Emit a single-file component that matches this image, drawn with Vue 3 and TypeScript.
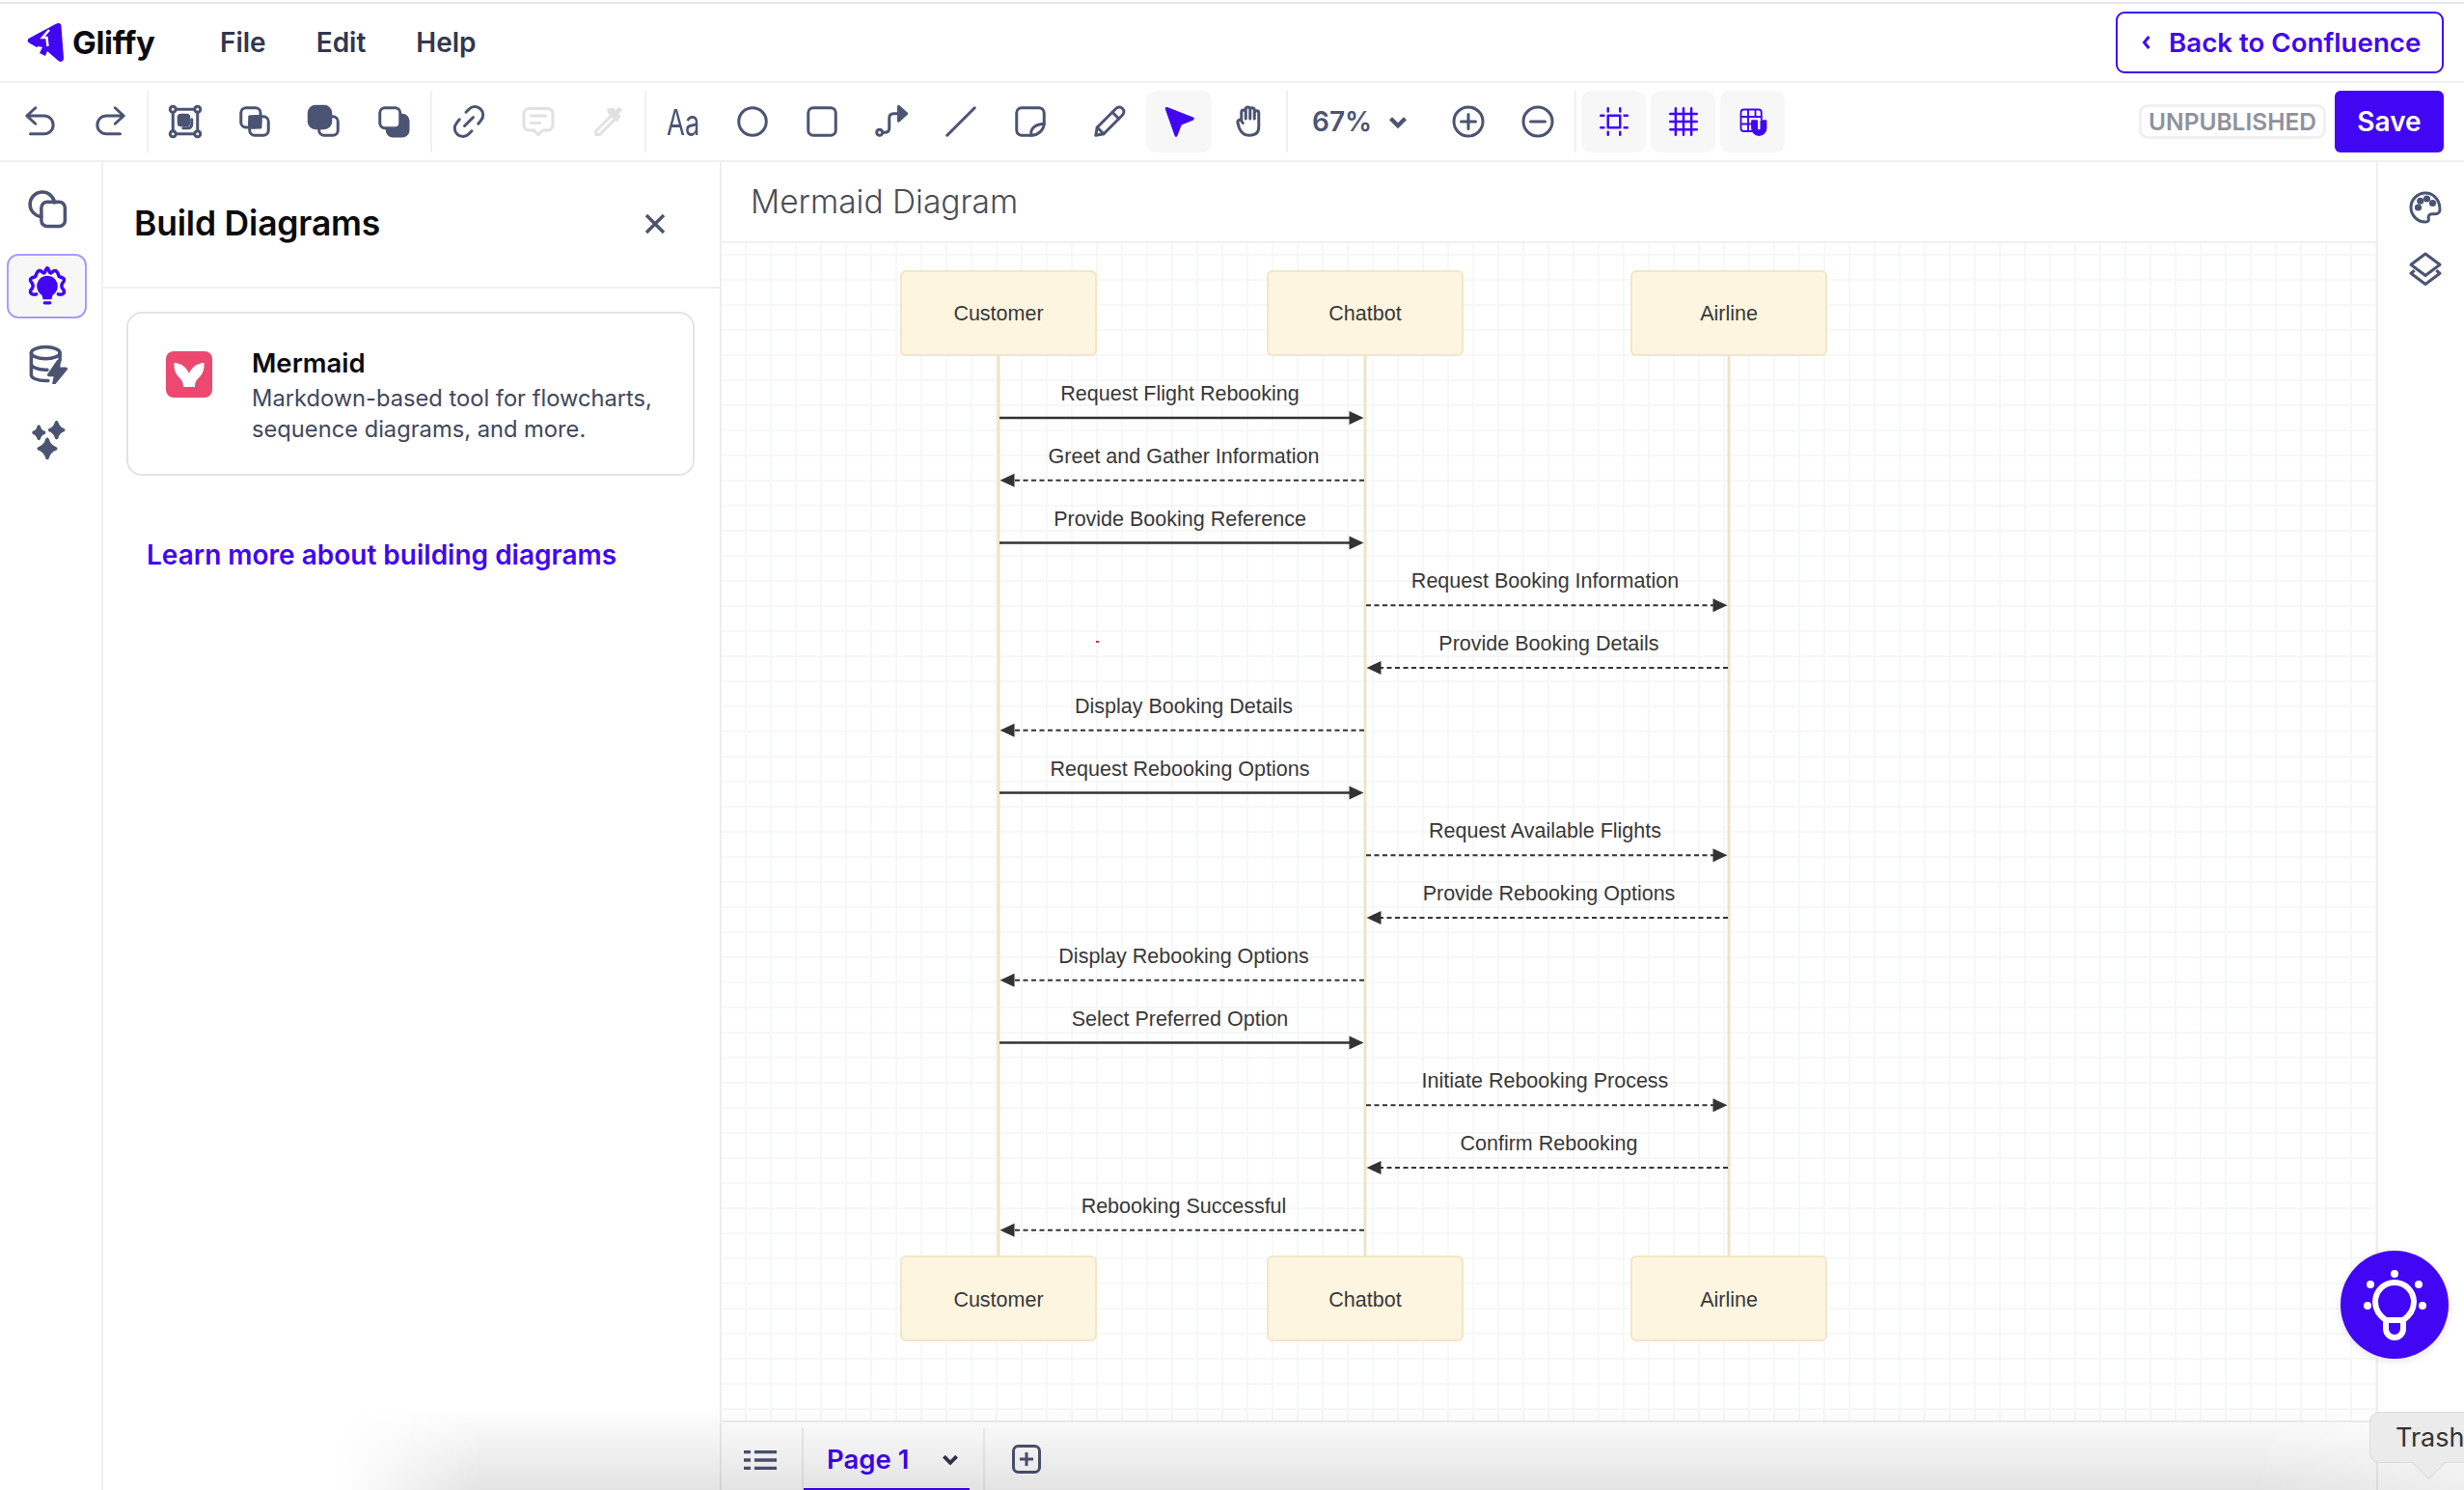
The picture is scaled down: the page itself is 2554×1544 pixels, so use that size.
<script setup lang="ts">
import { computed } from 'vue';

type Actor = 'customer' | 'chatbot' | 'airline';

const lifeline: Record<Actor, number> = { customer: 1035, chatbot: 1415, airline: 1792 };
const boxes: { name: string; actor: Actor }[] = [
  { name: 'Customer', actor: 'customer' },
  { name: 'Chatbot', actor: 'chatbot' },
  { name: 'Airline', actor: 'airline' },
];

const rawMessages: { label: string; from: Actor; to: Actor; dashed: boolean }[] = [
  { label: 'Request Flight Rebooking', from: 'customer', to: 'chatbot', dashed: false },
  { label: 'Greet and Gather Information', from: 'chatbot', to: 'customer', dashed: true },
  { label: 'Provide Booking Reference', from: 'customer', to: 'chatbot', dashed: false },
  { label: 'Request Booking Information', from: 'chatbot', to: 'airline', dashed: true },
  { label: 'Provide Booking Details', from: 'airline', to: 'chatbot', dashed: true },
  { label: 'Display Booking Details', from: 'chatbot', to: 'customer', dashed: true },
  { label: 'Request Rebooking Options', from: 'customer', to: 'chatbot', dashed: false },
  { label: 'Request Available Flights', from: 'chatbot', to: 'airline', dashed: true },
  { label: 'Provide Rebooking Options', from: 'airline', to: 'chatbot', dashed: true },
  { label: 'Display Rebooking Options', from: 'chatbot', to: 'customer', dashed: true },
  { label: 'Select Preferred Option', from: 'customer', to: 'chatbot', dashed: false },
  { label: 'Initiate Rebooking Process', from: 'chatbot', to: 'airline', dashed: true },
  { label: 'Confirm Rebooking', from: 'airline', to: 'chatbot', dashed: true },
  { label: 'Rebooking Successful', from: 'chatbot', to: 'customer', dashed: true },
];

const messages = computed(() =>
  rawMessages.map((m, i) => {
    const y = 433 + i * 64.75;
    const x1 = lifeline[m.from];
    const x2 = lifeline[m.to];
    const dir = x2 > x1 ? 1 : -1;
    const tip = x2 - dir * 1.5;
    const head = `${tip},${y} ${tip - dir * 15},${y - 7} ${tip - dir * 15},${y + 7}`;
    return {
      ...m,
      y,
      x1: x1 + dir,
      x2: tip - dir * 13,
      head,
      textX: (x1 + x2) / 2 - dir * 2,
    };
  })
);
</script>

<template>
  <div class="app">
    <!-- Top menu -->
    <header class="menubar">
      <div class="logo">
        <svg class="logo-mark" viewBox="0 0 41 41">
          <path d="M1.500 16 30 .8c3-1.500 5.500-.5 5.500 2.500L38 36c.2 3.500-3 5-5.500 3L21 29l-2 5-6-3 3-6-4-1-2 1-8.500-5c-1.200-.8-1-2.200 0-4Z" fill="#4106f4" />
          <path d="M23 7 16 15h4.500l1 9" fill="none" stroke="#fff" stroke-width="2.500" />
        </svg>
        <span class="logo-name">Gliffy</span>
      </div>
      <nav class="menu">
        <span>File</span>
        <span>Edit</span>
        <span>Help</span>
      </nav>
      <button class="back-btn">
        <svg class="back-chevron" viewBox="0 0 12 20"><path d="M8.500 4 3.500 10l5 6" /></svg>
        Back to Confluence
      </button>
    </header>

    <!-- Toolbar -->
    <div class="toolbar">
      <button class="tool">
        <svg class="ico" viewBox="0 0 24 24"><path d="M8.500 2.500 2.500 8l6 5.500M3 8h11.500a6.200 6.200 0 0 1 0 12.500H5" /></svg>
      </button>
      <button class="tool">
        <svg class="ico" viewBox="0 0 24 24"><path d="M15.500 2.500 21.500 8l-6 5.500M21 8H9.500a6.200 6.200 0 0 0 0 12.500H19" /></svg>
      </button>
      <i class="sep"></i>

      <button class="tool">
        <svg class="ico" viewBox="0 0 24 24">
          <circle cx="3.500" cy="3.500" r="2" /><circle cx="20.500" cy="3.500" r="2" />
          <circle cx="3.500" cy="20.500" r="2" /><circle cx="20.500" cy="20.500" r="2" />
          <path d="M5.500 3.500h13M5.500 20.500h13M3.500 5.500v13M20.500 5.500v13" />
          <rect x="7.500" y="7.500" width="7" height="7" rx="1.500" class="solid" />
          <path d="M16.500 10.500v3.500a2.500 2.500 0 0 1-2.500 2.500h-3.500" />
        </svg>
      </button>
      <button class="tool">
        <svg class="ico" viewBox="0 0 24 24">
          <rect x="8.500" y="8.500" width="7.500" height="7.500" class="solid" />
          <rect x="2.500" y="2.500" width="13.500" height="13.500" rx="3.500" />
          <rect x="8.500" y="8.500" width="13" height="13" rx="3.500" />
        </svg>
      </button>
      <button class="tool">
        <svg class="ico" viewBox="0 0 24 24">
          <rect x="8.500" y="8.500" width="13" height="13" rx="3.500" />
          <rect x="1.500" y="1.500" width="15" height="15" rx="4.500" class="solid" />
        </svg>
      </button>
      <button class="tool">
        <svg class="ico" viewBox="0 0 24 24">
          <rect x="7.500" y="7.500" width="14.500" height="14.500" rx="4" class="solid" />
          <rect x="2.500" y="2.500" width="14" height="14" rx="3.500" class="knock" />
        </svg>
      </button>
      <i class="sep"></i>

      <button class="tool">
        <svg class="ico" viewBox="0 0 24 24">
          <path d="M10 5.500 12 3.500a5.600 5.600 0 0 1 8.300 7.700L18.500 13.500M14 18.500 12 20.500a5.600 5.600 0 0 1-8.300-7.700l1.800-2.300M9 15l6-6" />
        </svg>
      </button>
      <button class="tool">
        <svg class="ico off" viewBox="0 0 24 24">
          <path d="M5.500 3h13A3.500 3.500 0 0 1 22 6.500v8a3.500 3.500 0 0 1-3.500 3.500H15l-3 3-3-3H5.500A3.500 3.500 0 0 1 2 14.500v-8A3.500 3.500 0 0 1 5.500 3Z" />
          <path d="M7 8h10M7 13h6" />
        </svg>
      </button>
      <button class="tool">
        <svg class="ico off eyedrop" viewBox="0 0 24 24">
          <path d="M16 7 4.500 18.500V21H7L18 10" />
          <path d="M13.500 5.500 19 11" />
          <path d="M16 3.500 18 5.500l2.500-2.500 1 1-2.500 2.500 1.500 2-1.500 1.500-6-6Z" class="solid-off" />
        </svg>
      </button>
      <i class="sep"></i>

      <button class="tool"><span class="aa">Aa</span></button>
      <button class="tool">
        <svg class="ico" viewBox="0 0 24 24"><circle cx="12" cy="12" r="9.500" /></svg>
      </button>
      <button class="tool">
        <svg class="ico" viewBox="0 0 24 24"><rect x="2.500" y="2.500" width="19" height="19" rx="3.500" /></svg>
      </button>
      <button class="tool">
        <svg class="ico" viewBox="0 0 24 24">
          <circle cx="3.800" cy="19.500" r="2" />
          <path d="M5.800 19.500h1.700c2 0 3-1 3-3V9.500c0-2 1-3 3-3h5" />
          <path d="M17 1.500 22.500 6.500 17 11.500Z" class="solid" />
        </svg>
      </button>
      <button class="tool">
        <svg class="ico" viewBox="0 0 24 24"><path d="M2.500 21.500 21.500 2.500" /></svg>
      </button>
      <button class="tool">
        <svg class="ico" viewBox="0 0 24 24">
          <path d="M13 21.500H6A3.500 3.500 0 0 1 2.500 18V6A3.500 3.500 0 0 1 6 2.500h12A3.500 3.500 0 0 1 21.500 6v7C21.500 18 17 21.500 13 21.500Z" />
          <path d="M13 21.500c-1.500-3 .5-7.500 8.500-8" />
        </svg>
      </button>
      <button class="tool tool-pen">
        <svg class="ico" viewBox="0 0 24 24">
          <path d="M2.500 21.500 3.500 16 16.500 3a2.800 2.800 0 0 1 4.500 4.500L8 20.500Z" />
          <path d="M14 5.500 18.500 10M3.500 16 8 20.500" />
        </svg>
      </button>
      <button class="tool tool-pointer">
        <svg class="ico blue" viewBox="0 0 24 24">
          <path d="M3.500 3 21.500 10 13 13.500 10 21.500Z" class="solid-blue" />
        </svg>
      </button>
      <button class="tool tool-hand">
        <svg class="ico" viewBox="0 0 24 24">
          <path d="M6.500 11V5.500a1.500 1.500 0 0 1 3 0V10M9.500 10V3.500a1.500 1.500 0 0 1 3 0V10M12.500 10V4a1.500 1.500 0 0 1 3 0v6M15.500 10V6a1.500 1.500 0 0 1 3 0v9.500c0 4-2.500 6-6.500 6s-6-2.500-7-5l-1-3.500c-.5-1.800 1.500-3 2.500-1.500l1 1.500" />
        </svg>
      </button>
      <i class="sep"></i>

      <div class="zoom">
        <span class="zoom-value">67%</span>
        <svg class="zoom-chevron" viewBox="0 0 20 14"><path d="M3 3.500 10 10.500 17 3.500" /></svg>
      </div>
      <button class="tool">
        <svg class="ico" viewBox="0 0 24 24"><circle cx="12" cy="12" r="10" /><path d="M12 7v10M7 12h10" /></svg>
      </button>
      <button class="tool">
        <svg class="ico" viewBox="0 0 24 24"><circle cx="12" cy="12" r="10" /><path d="M7 12h10" /></svg>
      </button>
      <i class="sep"></i>

      <div class="toggles">
        <button class="toggle">
          <svg class="ico small blue" viewBox="0 0 24 24">
            <rect x="7" y="7" width="10" height="10" />
            <path d="M7 1v2.500M17 1v2.500M7 20.500V23M17 20.500V23M1 7h2.500M20.500 7H23M1 17h2.500M20.500 17H23" />
          </svg>
        </button>
        <button class="toggle">
          <svg class="ico small blue" viewBox="0 0 24 24">
            <path d="M5.500 1v22M12 1v22M18.500 1v22M1 5.500h22M1 12h22M1 18.500h22" />
          </svg>
        </button>
        <button class="toggle">
          <svg class="ico small blue" viewBox="0 0 24 24">
            <path d="M12 20H4.500A2.500 2.500 0 0 1 2 17.500v-13A2.500 2.500 0 0 1 4.500 2h12A2.500 2.500 0 0 1 19 4.500V10M2 8h17M2 14h10M8 2v18M14 2v6" class="thin" />
            <path d="M11.500 11.500v6a5.500 5.500 0 0 0 11 0v-6h-3.500v6a2 2 0 0 1-4 0v-6Z" class="solid-blue" />
          </svg>
        </button>
      </div>

      <div class="actions">
        <span class="status">UNPUBLISHED</span>
        <button class="save">Save</button>
      </div>
    </div>

    <div class="workspace">
      <!-- Left rail -->
      <aside class="rail">
        <button class="rail-btn">
          <svg class="rail-ico" viewBox="0 0 24 24">
            <path d="M8.500 16.300A7.300 7.300 0 1 1 16.300 8" />
            <rect x="8.500" y="7.500" width="14" height="14.500" rx="3.500" />
          </svg>
        </button>
        <button class="rail-btn active">
          <svg class="rail-ico blue" viewBox="0 0 24 24">
            <path d="M5.500 16.500C4 17 2 16.500 2 15c0-1.500 1.500-1.500 1.500-3.500S2 9.500 2 8c0-1.500 2.500-1.500 3-2s.5-3.500 2.500-3.500C9 2.500 9 4 10 4s1-3 2-3 1 3 2 3 1-1.500 2.500-1.500c2 0 2 3 2.500 3.500s3 .5 3 2c0 1.500-1.500 1.500-1.500 3.500s1.500 2 1.500 3.500-2 2-3.500 1.500" />
            <path d="M12 5.500A6.200 6.200 0 0 0 8.800 17l.7 2.500h5l.7-2.500A6.200 6.200 0 0 0 12 5.500Z" class="flat" />
            <rect x="9.500" y="20.700" width="5" height="1.800" rx=".9" class="flat" />
          </svg>
        </button>
        <button class="rail-btn">
          <svg class="rail-ico" viewBox="0 0 24 24">
            <ellipse cx="11" cy="5.500" rx="8.500" ry="3.500" />
            <path d="M2.500 5.500v13c0 2 4 3.500 8.500 3.500h1.500M19.500 5.500V10M2.500 12c0 2 4 3.500 8.500 3.500h1" />
            <path d="M18.500 10.500 13 18.500h4l-1 5 7-8.500h-4.500l.5-4.500Z" class="solid" />
          </svg>
        </button>
        <button class="rail-btn">
          <svg class="rail-ico" viewBox="0 0 24 24">
            <path d="M7 3.500c.5 2 1.500 3 3 3.500-1.500.5-2.500 1.500-3 3.500-.5-2-1.500-3-3-3.500 1.500-.5 2.500-1.500 3-3.500Z" class="solid" />
            <path d="M17.500 1c.7 2.500 2 3.800 4 4.500-2 .7-3.300 2-4 4.500-.7-2.500-2-3.800-4-4.500 2-.7 3.300-2 4-4.500Z" class="solid" />
            <path d="M12 11c.8 3 2.300 4.500 5 5.500-2.700 1-4.200 2.500-5 5.500-.8-3-2.300-4.500-5-5.500 2.700-1 4.200-2.500 5-5.500Z" class="solid" />
          </svg>
        </button>
      </aside>

      <!-- Build Diagrams panel -->
      <section class="panel">
        <div class="panel-head">
          <h2>Build Diagrams</h2>
          <svg class="close" viewBox="0 0 24 24"><path d="M3 3l18 18M21 3 3 21" /></svg>
        </div>
        <div class="card">
          <svg class="mermaid-logo" viewBox="0 0 48 48">
            <rect width="48" height="48" rx="8" fill="#ec4870" />
            <path d="M8.500 12c7 .5 12.500 4 15.500 11 3-7 8.500-10.500 15.500-11 .5 6-1 11-4.500 14.500-3 3-5 5-5 10.500H18c0-5.500-2-7.500-5-10.500C9.500 23 8 18 8.500 12Z" fill="#fff" />
          </svg>
          <div class="card-body">
            <div class="card-title">Mermaid</div>
            <p>Markdown-based tool for flowcharts, sequence diagrams, and more.</p>
          </div>
        </div>
        <a class="learn">Learn more about building diagrams</a>
      </section>

      <!-- Editor -->
      <main class="editor">
        <div class="doc-title">Mermaid Diagram</div>
        <div class="canvas">
          <svg class="diagram" viewBox="748 252 1715 1220" width="1715" height="1220">
            <line v-for="b in boxes" :key="b.name" :x1="lifeline[b.actor]" y1="368" :x2="lifeline[b.actor]" y2="1302" class="life" />
            <template v-for="b in boxes" :key="b.name">
              <rect :x="lifeline[b.actor] - 101" y="281" width="202" height="87" rx="5" class="actor" />
              <text :x="lifeline[b.actor]" y="325" class="actor-label">{{ b.name }}</text>
              <rect :x="lifeline[b.actor] - 101" y="1302" width="202" height="87" rx="5" class="actor" />
              <text :x="lifeline[b.actor]" y="1347" class="actor-label">{{ b.name }}</text>
            </template>
            <g v-for="m in messages" :key="m.label">
              <text :x="m.textX" :y="m.y - 25" class="msg-label">{{ m.label }}</text>
              <line :x1="m.x1" :y1="m.y" :x2="m.x2" :y2="m.y" :class="m.dashed ? 'msg-dashed' : 'msg-solid'" />
              <polygon :points="m.head" class="msg-head" />
            </g>
            <rect x="1136" y="664" width="3" height="2" fill="#d0304a" />
          </svg>
        </div>
        <div class="pagebar">
          <svg class="list-ico" viewBox="0 0 34 20">
            <path d="M0 1.500h7M11 1.500h23M0 10h7M11 10h23M0 18.500h7M11 18.500h23" />
          </svg>
          <div class="page-tab">
            <span>Page 1</span>
            <svg class="page-chevron" viewBox="0 0 16 10"><path d="M2 2 8 8 14 2" /></svg>
          </div>
          <svg class="add-page" viewBox="0 0 30 30">
            <rect x="1.500" y="1.500" width="27" height="27" rx="5" />
            <path d="M15 8v14M8 15h14" />
          </svg>
        </div>
      </main>

      <!-- Right rail -->
      <aside class="side">
        <svg class="side-ico" viewBox="0 0 24 24">
          <path d="M12 2a10 10 0 1 0 0 20c2 0 2.500-1.200 2.200-2.300-.4-1.500 .3-3.200 2.300-3.200h2.500a3 3 0 0 0 3-3C22 6.500 17.500 2 12 2Z" />
          <circle cx="7" cy="12" r="1.400" class="solid" /><circle cx="8.500" cy="7.500" r="1.400" class="solid" />
          <circle cx="13" cy="6" r="1.400" class="solid" /><circle cx="17" cy="9" r="1.400" class="solid" />
        </svg>
        <svg class="side-ico" viewBox="0 0 24 24">
          <path d="M12 2 22 9.500 12 17 2 9.500Z" />
          <path d="M4.500 13.500 2 15.500 12 23l10-7.500-2.500-2" />
        </svg>
      </aside>
    </div>

    <!-- Overlays -->
    <div class="bottom-fade"></div>
    <button class="tips">
      <svg viewBox="0 0 112 112" width="112" height="112">
        <g fill="#fff">
          <circle cx="56" cy="24" r="4" /><circle cx="31" cy="35" r="4" /><circle cx="81" cy="35" r="4" />
          <circle cx="28" cy="57" r="4" /><circle cx="85" cy="57" r="4" />
        </g>
        <path d="M47 72C40 67 36 60 36 53a20 20 0 0 1 40 0c0 7-4 14-11 19M47 72v9a9 9 0 0 0 18 0v-9M47 72h18" fill="none" stroke="#fff" stroke-width="6" />
      </svg>
    </button>
    <div class="tooltip">Trash</div>
  </div>
</template>

<style scoped>
.app {
  position: relative;
  width: 2554px;
  height: 1544px;
  overflow: hidden;
  display: flex;
  flex-direction: column;
  background: #fff;
  font-family: Inter, 'Noto Sans', sans-serif;
  color: #32364f;
}

button {
  border: none;
  background: none;
  padding: 0;
  font-family: inherit;
  cursor: pointer;
}

/* --- Menu bar --- */
.menubar {
  height: 84px;
  margin-top: 2px;
  box-sizing: border-box;
  flex: none;
  display: flex;
  align-items: center;
  padding: 0 21px 0 28px;
  border-top: 2px solid #e9e3f1;
  border-bottom: 2px solid #f0eff2;
}

.logo {
  display: flex;
  align-items: center;
  gap: 6px;
  width: 200px;
}

.logo-mark {
  width: 41px;
  height: 41px;
}

.logo-name {
  font-size: 33px;
  font-weight: 700;
  color: #0b0b10;
  letter-spacing: -0.3px;
}

.menu {
  display: flex;
  gap: 52px;
  font-size: 28px;
  font-weight: 600;
}

.back-btn {
  margin-left: auto;
  height: 64px;
  width: 340px;
  display: flex;
  align-items: center;
  box-sizing: border-box;
  padding-left: 24px;
  gap: 17px;
  border: 2.500px solid #4106f4;
  border-radius: 9px;
  color: #4106f4;
  font-size: 27.700px;
  font-weight: 600;
}

.back-chevron {
  width: 12px;
  height: 20px;
  fill: none;
  stroke: #4106f4;
  stroke-width: 3;
}

/* --- Toolbar --- */
.toolbar {
  height: 82px;
  flex: none;
  box-sizing: border-box;
  display: flex;
  align-items: center;
  padding: 0 21px 0 6px;
  border-bottom: 2px solid #f0eff2;
}

.tool {
  width: 72px;
  height: 64px;
  flex: none;
  display: flex;
  align-items: center;
  justify-content: center;
}

.tool-pen {
  margin-left: 10px;
}

.tool-pointer {
  width: 68px;
  margin-left: 2px;
  background: #f7f7f8;
  border-radius: 10px;
}

.tool-hand {
  margin-left: 3px;
}

.sep {
  width: 2px;
  height: 64px;
  margin: 0 2px;
  flex: none;
  background: #f0eff2;
}

.ico {
  width: 36px;
  height: 36px;
  fill: none;
  stroke: #4b5473;
  stroke-width: 2;
  stroke-linecap: round;
  stroke-linejoin: round;
}

.ico.small {
  width: 30px;
  height: 30px;
}

.ico.off {
  stroke: #e0e1e3;
}

.ico.eyedrop {
  margin-right: 3px;
}

.ico.blue {
  stroke: #4106f4;
}

.solid {
  fill: #4b5473;
  stroke: #4b5473;
}

.solid-off {
  fill: #e0e1e3;
  stroke: #e0e1e3;
}

.solid-blue {
  fill: #4106f4;
  stroke: #4106f4;
}

.flat {
  fill: #4106f4;
  stroke: none;
}

.knock {
  fill: #fff;
}

.thin {
  stroke-width: 1.500;
}

.aa {
  display: block;
  font-size: 37px;
  font-weight: 400;
  line-height: 1;
  color: #4b5473;
  transform: scaleX(0.74);
}

.zoom {
  width: 149px;
  flex: none;
  display: flex;
  align-items: center;
  box-sizing: border-box;
  padding-left: 23px;
  gap: 16px;
}

.zoom-value {
  font-size: 28px;
  font-weight: 600;
  color: #4b5473;
}

.zoom-chevron {
  width: 22px;
  height: 15px;
  fill: none;
  stroke: #4b5473;
  stroke-width: 4;
}

.toggles {
  display: flex;
  gap: 5px;
  margin-left: 3px;
}

.toggle {
  width: 67px;
  height: 64px;
  display: flex;
  align-items: center;
  justify-content: center;
  background: #f7f7f8;
  border-radius: 10px;
}

.actions {
  margin-left: auto;
  display: flex;
  align-items: center;
  gap: 9px;
}

.status {
  width: 194px;
  height: 36px;
  box-sizing: border-box;
  display: flex;
  align-items: center;
  justify-content: center;
  border: 3px solid #f0f0f1;
  border-radius: 9px;
  font-size: 24.500px;
  font-weight: 600;
  color: #8e929c;
}

.save {
  width: 113px;
  height: 64px;
  background: #4106f4;
  border-radius: 6px;
  color: #fff;
  font-size: 28px;
  font-weight: 600;
}

/* --- Workspace --- */
.workspace {
  flex: 1;
  min-height: 0;
  display: flex;
}

.rail {
  width: 107px;
  flex: none;
  box-sizing: border-box;
  display: flex;
  flex-direction: column;
  align-items: flex-start;
  gap: 13px;
  padding: 15px 0 0 7px;
  border-right: 2px solid #f0eff2;
}

.rail-btn {
  width: 83px;
  height: 67px;
  box-sizing: border-box;
  display: flex;
  align-items: center;
  justify-content: center;
  border-radius: 12px;
}

.rail-btn.active {
  background: #f7f7f8;
  border: 2.500px solid #a99bfb;
}

.rail-ico {
  width: 42px;
  height: 42px;
  fill: none;
  stroke: #4b5473;
  stroke-width: 2;
  stroke-linecap: round;
  stroke-linejoin: round;
}

.rail-ico.blue {
  stroke: #4106f4;
}

/* --- Panel --- */
.panel {
  width: 641px;
  flex: none;
  box-sizing: border-box;
  border-right: 2px solid #eeeeef;
}

.panel-head {
  height: 131px;
  box-sizing: border-box;
  display: flex;
  align-items: center;
  justify-content: space-between;
  padding: 0 55px 2px 32px;
  border-bottom: 2px solid #f0eff2;
}

.panel-head h2 {
  margin: 0;
  font-size: 35.500px;
  font-weight: 600;
  color: #0b0b10;
  letter-spacing: -0.2px;
}

.close {
  width: 24px;
  height: 24px;
  fill: none;
  stroke: #4b5473;
  stroke-width: 3.500;
}

.card {
  margin: 24px 26px 0 24px;
  height: 170px;
  box-sizing: border-box;
  display: flex;
  gap: 41px;
  padding: 39px 0 0 39px;
  border: 2.500px solid #e3e3e3;
  border-radius: 16px;
}

.mermaid-logo {
  width: 48px;
  height: 48px;
  flex: none;
}

.card-body {
  margin-top: -6px;
}

.card-title {
  font-size: 27.500px;
  line-height: 36px;
  font-weight: 600;
  color: #0b0b10;
}

.card-body p {
  margin: 3px 0 0;
  font-size: 23.700px;
  line-height: 32px;
  color: #42475e;
}

.learn {
  display: block;
  margin: 62px 0 0 45px;
  font-size: 28px;
  line-height: 40px;
  font-weight: 600;
  color: #4106f4;
}

/* --- Editor --- */
.editor {
  width: 1715px;
  flex: none;
  display: flex;
  flex-direction: column;
}

.doc-title {
  height: 84px;
  flex: none;
  box-sizing: border-box;
  padding: 0 0 0 30px;
  display: flex;
  align-items: center;
  border-bottom: 2px solid #f0eff2;
  font-size: 33.500px;
  font-weight: 300;
  color: #4a4d57;
}

.canvas {
  flex: 1;
  min-height: 0;
  position: relative;
  background-color: #fff;
  background-image:
    linear-gradient(to right, #f6f8f8 2px, transparent 2px),
    linear-gradient(to bottom, #f6f8f8 2px, transparent 2px);
  background-size: 26px 26px;
  background-position: 24px 11px;
}

.diagram {
  display: block;
  position: absolute;
  left: 0;
  top: 0;
}

.life {
  stroke: #efe3c5;
  stroke-width: 3;
}

.actor {
  fill: #fdf5e0;
  stroke: #f2e6c6;
  stroke-width: 2;
}

.actor-label,
.msg-label {
  font-family: 'Liberation Sans', Arial, sans-serif;
  fill: #383838;
  text-anchor: middle;
  dominant-baseline: central;
  font-size: 21.500px;
}

.msg-solid {
  stroke: #333;
  stroke-width: 2.500;
}

.msg-dashed {
  stroke: #333;
  stroke-width: 2;
  stroke-dasharray: 5 3.500;
}

.msg-head {
  fill: #333;
}

.pagebar {
  height: 72px;
  flex: none;
  box-sizing: border-box;
  display: flex;
  align-items: flex-end;
  border-top: 2px solid #eeeeef;
}

.list-ico {
  width: 34px;
  height: 20px;
  margin: 0 0 21px 23px;
  fill: none;
  stroke: #4b5473;
  stroke-width: 3.500;
}

.page-tab {
  height: 64px;
  width: 190px;
  margin-left: 26px;
  box-sizing: border-box;
  display: flex;
  align-items: center;
  padding: 0 25px 0 24px;
  justify-content: space-between;
  border-left: 2px solid #eeeeef;
  border-right: 2px solid #eeeeef;
  color: #4106f4;
  font-size: 27.500px;
  font-weight: 600;
  position: relative;
}

.page-tab::after {
  content: '';
  position: absolute;
  left: 0;
  bottom: 0;
  width: 172px;
  height: 2px;
  background: #4106f4;
}

.page-chevron {
  width: 18px;
  height: 11px;
  fill: none;
  stroke: #32364f;
  stroke-width: 3.500;
}

.add-page {
  width: 30px;
  height: 30px;
  margin: 0 0 17px 28px;
  fill: none;
  stroke: #4b5473;
  stroke-width: 3;
}

/* --- Right rail --- */
.side {
  flex: 1;
  box-sizing: border-box;
  display: flex;
  flex-direction: column;
  align-items: center;
  gap: 27px;
  padding: 29px 0 0 8px;
  border-left: 2px solid #eeeeef;
}

.side-ico {
  width: 36px;
  height: 36px;
  fill: none;
  stroke: #4b5473;
  stroke-width: 2;
  stroke-linejoin: round;
}

/* --- Overlays --- */
.bottom-fade {
  position: absolute;
  left: 350px;
  right: 0;
  bottom: 0;
  height: 86px;
  pointer-events: none;
  background: linear-gradient(to bottom, rgba(0, 0, 0, 0), rgba(0, 0, 0, 0.11));
  -webkit-mask-image: linear-gradient(to right, transparent, #000 150px, #000 90%, rgba(0, 0, 0, 0.6));
  mask-image: linear-gradient(to right, transparent, #000 150px, #000 90%, rgba(0, 0, 0, 0.6));
}

.tips {
  position: absolute;
  left: 2426px;
  top: 1296px;
  width: 112px;
  height: 112px;
  border-radius: 50%;
  background: #4106f4;
  box-shadow: 0 2px 8px rgba(0, 0, 0, 0.12);
}

.tips svg {
  display: block;
}

.tooltip {
  position: absolute;
  left: 2456px;
  top: 1463px;
  width: 120px;
  height: 53px;
  box-sizing: border-box;
  padding-left: 26px;
  display: flex;
  align-items: center;
  background: #ebebeb;
  border: 1px solid #dcdcdc;
  border-radius: 10px;
  font-size: 27px;
  color: #333;
}

.tooltip::after {
  content: '';
  position: absolute;
  left: 48px;
  bottom: -13px;
  width: 24px;
  height: 24px;
  background: #ebebeb;
  border-right: 1px solid #dcdcdc;
  border-bottom: 1px solid #dcdcdc;
  transform: rotate(45deg);
}
</style>

<style>
html,
body {
  margin: 0;
  overflow: hidden;
}
</style>
